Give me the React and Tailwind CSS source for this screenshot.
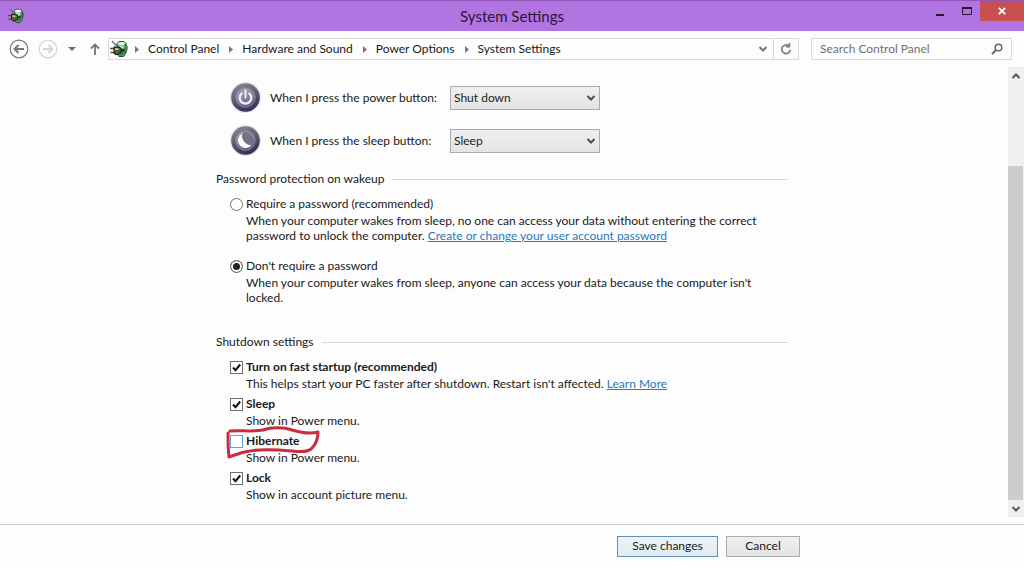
import { useState } from "react";

function PlugIcon({ className }) {
  return (
    <svg className={className} viewBox="0 0 18 18" aria-hidden="true">
      <path d="M7 3.500 9 1.500h5l2 2v9.500l-2.500 3.500H9L7 14z" fill="#4fae62" stroke="#2c4a34" strokeWidth="1" />
      <path d="M7.500 3.800 9.300 2h4.400l1.300 1.600-1.300 1.400H9z" fill="#eef6f0" />
      <path d="M8 5.500h5.500V8L11 9z" fill="#b4e2be" />
      <path d="M12 10.500 15 8v4.500L13 15.500H9.500z" fill="#2a8a3e" />
      <path d="M15.500 4.500q2.500 1.500 1.500 5-.5 2-1.500 2.500" fill="none" stroke="#3c4a40" strokeWidth="1" />
      <path d="M2 1 6 5.500" stroke="#54748f" strokeWidth="1.300" />
      <path d="M0 8.500H4M0.500 12.500H4" stroke="#5b4a2a" strokeWidth="1.300" />
      <path d="M4 7h4q3 .3 3.500 3-.5 3.500-4 4.500H5.500L4 13z" fill="#54603c" stroke="#151a12" strokeWidth="1.100" />
      <path d="M5 8.300h3l.8 1.500H5z" fill="#e3dfb4" />
      <path d="M11 10.500q2 .5 3-1" fill="none" stroke="#151a12" strokeWidth="1.500" />
    </svg>
  );
}

function Chevron({ className, up }) {
  return (
    <svg className={className} viewBox="0 0 10 8" fill="none" stroke="currentColor" strokeWidth="2" aria-hidden="true">
      <path d={up ? "M1.500 6 5 2.500 8.500 6" : "M1.500 2 5 5.500 8.500 2"} />
    </svg>
  );
}

function Orb({ kind }) {
  return (
    <svg className="size-8 shrink-0" viewBox="0 0 32 32" aria-hidden="true">
      <defs>
        <linearGradient id={kind + "Rim"} x1="0.2" y1="0" x2="0.6" y2="1">
          <stop offset="0" stopColor="#8b898d" />
          <stop offset="0.45" stopColor="#625f72" />
          <stop offset="1" stopColor="#322f55" />
        </linearGradient>
        <linearGradient id={kind + "Face"} x1="0.2" y1="0" x2="0.7" y2="1">
          <stop offset="0" stopColor="#a5a4b6" />
          <stop offset="0.5" stopColor="#8584a0" />
          <stop offset="1" stopColor="#5a587a" />
        </linearGradient>
      </defs>
      <circle cx="15.500" cy="15.500" r="15.500" fill="#e4e4e8" />
      <circle cx="15.500" cy="15.500" r="14.300" fill={`url(#${kind}Rim)`} />
      <circle cx="15.500" cy="15.500" r="9.800" fill={`url(#${kind}Face)`} stroke="#8988a0" strokeWidth="0.800" />
      {kind === "power" ? (
        <g fill="none" stroke="#f0f0f6" strokeLinecap="round">
          <path d="M11.700 11.500a5.800 5.800 0 1 0 7.600 0" strokeWidth="2.300" />
          <path d="M15.500 8.500v7" strokeWidth="2" />
        </g>
      ) : (
        <>
          <circle cx="15.500" cy="15.500" r="7.500" fill="#fbfbff" />
          <ellipse cx="17.800" cy="13.400" rx="4.800" ry="7.400" transform="rotate(-36 17.800 13.400)" fill="#74728b" />
        </>
      )}
    </svg>
  );
}

function ButtonRow({ kind, id, label, options }) {
  return (
    <div className="flex items-center">
      <div className="flex w-[54px] pl-[14px]">
        <Orb kind={kind} />
      </div>
      <label htmlFor={id} className="w-[180px]">{label}</label>
      <div className="relative">
        <select id={id} className="block h-6 w-[150px] appearance-none border border-[#acacac] bg-linear-to-b from-[#efefef] to-[#e4e4e4] pr-5 pl-[3px] text-[#222]">
          {options.map((o) => (
            <option key={o}>{o}</option>
          ))}
        </select>
        <Chevron className="pointer-events-none absolute top-2 right-1 h-2 w-[10px] text-[#505050]" />
      </div>
    </div>
  );
}

function SectionTitle({ children }) {
  return (
    <div className="flex items-center gap-2">
      <h2>{children}</h2>
      <div className="h-px flex-1 bg-[#d8d8d8]" />
    </div>
  );
}

function RadioItem({ id, label, checked, onChange, children }) {
  return (
    <div>
      <div className="flex items-center gap-[3px]">
        <input
          type="radio"
          name="wakeup"
          id={id}
          checked={checked}
          onChange={onChange}
          className="size-[13px] appearance-none rounded-full border border-[#707070] bg-white checked:bg-[#222] checked:shadow-[inset_0_0_0_2px_white]"
        />
        <label htmlFor={id}>{label}</label>
      </div>
      <p className="pr-4 pl-4 leading-[15px]">{children}</p>
    </div>
  );
}

function CheckItem({ id, label, defaultChecked, marked, children }) {
  return (
    <div className="relative">
      <div className="flex items-center gap-[3px]">
        <span className="relative flex">
          <input
            type="checkbox"
            id={id}
            defaultChecked={defaultChecked}
            className={
              "peer size-[13px] appearance-none border bg-white " +
              (marked ? "border-[#5aa7dc]" : "border-[#707070]")
            }
          />
          <svg className="pointer-events-none absolute inset-0 hidden size-[13px] peer-checked:block" viewBox="0 0 13 13" aria-hidden="true">
            <path d="M3 6.500 5.500 9.200 10.200 3.500" fill="none" stroke="#111" strokeWidth="2" />
          </svg>
        </span>
        <label htmlFor={id} className="font-bold">{label}</label>
      </div>
      <p className="pl-4 leading-[15px]">{children}</p>
      {marked && (
        <svg className="pointer-events-none absolute -top-2 -left-1 h-9 w-24" viewBox="0 0 96 36" fill="none" aria-hidden="true">
          <path
            d="M4 7C14 6 26 8 37 6C45 3 58 3 66 6C76 9 85 10 92 8C92 15 90 20 86 24C83 28 74 28 66 27C55 26 34 25 24 27C15 28 10 31 3 33C2 25 2 16 2 9"
            stroke="#cb2b3e"
            strokeWidth="3"
            strokeLinecap="round"
            strokeLinejoin="round"
          />
        </svg>
      )}
    </div>
  );
}

const crumbs = ["Control Panel", "Hardware and Sound", "Power Options", "System Settings"];

export default function App() {
  const [wakeup, setWakeup] = useState("none");
  return (
    <div className="flex min-h-screen flex-col bg-[#fdfdfd] font-[Lato,'Open_Sans',sans-serif] text-[12px] leading-[18px] text-[#1a1a1a]">
      <header className="flex h-[31px] items-start border-t border-[#9355b8] bg-[#b174e0]">
        <div className="flex h-[30px] flex-1 items-center">
          <PlugIcon className="ml-2 size-4" />
        </div>
        <h1 className="flex h-[30px] items-center text-[15px] text-[#2b1638]">System Settings</h1>
        <div className="flex flex-1 justify-end">
          <button aria-label="Minimize" className="flex h-5 w-[27px] items-center justify-center">
            <svg className="size-3" viewBox="0 0 12 12"><path d="M2 9h8v2H2z" fill="#2b1638" /></svg>
          </button>
          <button aria-label="Maximize" className="flex h-5 w-[27px] items-center justify-center">
            <svg className="size-3" viewBox="0 0 12 12" fill="none" stroke="#2b1638"><path d="M1.500 2.500h9v7h-9z" /><path d="M1 3h10" strokeWidth="2" /></svg>
          </button>
          <button aria-label="Close" className="flex h-5 w-11 items-center justify-center bg-[#c75050]">
            <svg className="size-2" viewBox="0 0 8 8" stroke="#fff" strokeWidth="1.800"><path d="M.8.8l6.400 6.400M7.200.8.8 7.200" /></svg>
          </button>
        </div>
      </header>

      <nav className="flex h-9 items-center pr-3 pl-[9px]">
        <button aria-label="Back">
          <svg className="size-5" viewBox="0 0 20 20" fill="none" stroke="#777"><circle cx="10" cy="10" r="8.800" strokeWidth="1.200" /><path d="M15 10H6M9.500 6 5.500 10l4 4" strokeWidth="2" /></svg>
        </button>
        <button aria-label="Forward" className="ml-[9px]">
          <svg className="size-5" viewBox="0 0 20 20" fill="none" stroke="#d4d4d4"><circle cx="10" cy="10" r="8.800" strokeWidth="1.200" /><path d="M5 10h9M10.500 6l4 4-4 4" strokeWidth="2" /></svg>
        </button>
        <button aria-label="Recent locations" className="ml-[10px]">
          <svg className="h-1 w-2" viewBox="0 0 8 4"><path d="M0 0h8L4 4z" fill="#707070" /></svg>
        </button>
        <button aria-label="Up" className="ml-[14px]">
          <svg className="h-3 w-[10px]" viewBox="0 0 10 12" fill="none" stroke="#777" strokeWidth="1.800"><path d="M5 12V1.500M1 5.500l4-4 4 4" /></svg>
        </button>
        <div className="ml-2 flex h-[22px] flex-1 items-center border border-[#d9d9d9]">
          <PlugIcon className="ml-px size-[18px]" />
          <ol className="flex flex-1 items-center gap-[10px] pl-[7px]">
            {crumbs.map((c) => (
              <li key={c} className="flex items-center gap-[9px]">
                <svg className="h-[7px] w-1" viewBox="0 0 4 7"><path d="M0 0l4 3.500L0 7z" fill="#777" /></svg>
                <a href="#">{c}</a>
              </li>
            ))}
          </ol>
          <button aria-label="Previous locations" className="flex h-5 w-5 items-center justify-center">
            <Chevron className="h-2 w-[10px] text-[#777]" />
          </button>
          <button aria-label="Refresh" className="flex h-5 w-[25px] items-center justify-center border-l border-[#d9d9d9]">
            <svg className="size-3" viewBox="0 0 12 12" fill="none" stroke="#808080" strokeWidth="1.700"><path d="M8.800 3A4.300 4.300 0 1 0 10.300 6.600" /><path d="M5.800 3.600h3.600V0" /></svg>
          </button>
        </div>
        <div className="ml-3 flex h-[22px] w-[201px] items-center border border-[#d9d9d9] px-2">
          <input aria-label="Search Control Panel" placeholder="Search Control Panel" className="min-w-0 flex-1 bg-transparent outline-none placeholder:text-[#707070]" />
          <svg className="size-3" viewBox="0 0 12 12" fill="none" stroke="#666"><circle cx="7.500" cy="4.500" r="3.300" strokeWidth="1.500" /><path d="M5 7 1 11" strokeWidth="2" /></svg>
        </div>
      </nav>

      <div className="flex flex-1">
        <main className="flex-1 pt-[15px] pr-1 pb-2">
          <form className="mx-auto max-w-[572px]">
            <div className="flex flex-col gap-[11px]">
              <ButtonRow kind="power" id="power" label="When I press the power button:" options={["Shut down", "Sleep", "Do nothing"]} />
              <ButtonRow kind="sleep" id="sleep" label="When I press the sleep button:" options={["Sleep", "Shut down", "Do nothing"]} />
            </div>

            <section className="mt-[13px]">
              <SectionTitle>Password protection on wakeup</SectionTitle>
              <div className="mt-[7px] flex flex-col gap-[14px] pl-[14px]">
                <RadioItem id="require" label="Require a password (recommended)" checked={wakeup === "require"} onChange={() => setWakeup("require")}>
                  When your computer wakes from sleep, no one can access your data without entering the correct password to unlock the computer.{" "}
                  <a href="#" className="text-[#2a78b8] underline">Create or change your user account password</a>
                </RadioItem>
                <RadioItem id="none" label="Don't require a password" checked={wakeup === "none"} onChange={() => setWakeup("none")}>
                  When your computer wakes from sleep, anyone can access your data because the computer isn't locked.
                </RadioItem>
              </div>
            </section>

            <section className="mt-7">
              <SectionTitle>Shutdown settings</SectionTitle>
              <div className="mt-[7px] flex flex-col gap-1 pl-[14px]">
                <CheckItem id="fast" label="Turn on fast startup (recommended)" defaultChecked>
                  This helps start your PC faster after shutdown. Restart isn't affected.{" "}
                  <a href="#" className="text-[#2a78b8] underline">Learn More</a>
                </CheckItem>
                <CheckItem id="sleepMenu" label="Sleep" defaultChecked>Show in Power menu.</CheckItem>
                <CheckItem id="hibernate" label="Hibernate" marked>Show in Power menu.</CheckItem>
                <CheckItem id="lock" label="Lock" defaultChecked>Show in account picture menu.</CheckItem>
              </div>
            </section>
          </form>
        </main>
        <div className="mb-[7px] flex w-4 flex-col bg-[#f0f0f0] text-[#555]" aria-hidden="true">
          <div className="flex h-[17px] items-center justify-center"><Chevron up className="h-2 w-[10px]" /></div>
          <div className="flex-[82]" />
          <div className="mr-px flex-[334] bg-[#cdcdcd]" />
          <div className="flex h-[17px] items-center justify-center"><Chevron className="h-2 w-[10px]" /></div>
        </div>
      </div>

      <footer className="flex h-[43px] items-center justify-end gap-2 border-t border-[#cfcfcf] pr-56">
        <button className="h-[21px] w-[101px] border border-[#5a93bd] bg-linear-to-b from-[#edf3f7] to-[#e2ebf1]">Save changes</button>
        <button className="h-[21px] w-[74px] border border-[#acacac] bg-linear-to-b from-[#efefef] to-[#e4e4e4]">Cancel</button>
      </footer>
    </div>
  );
}
